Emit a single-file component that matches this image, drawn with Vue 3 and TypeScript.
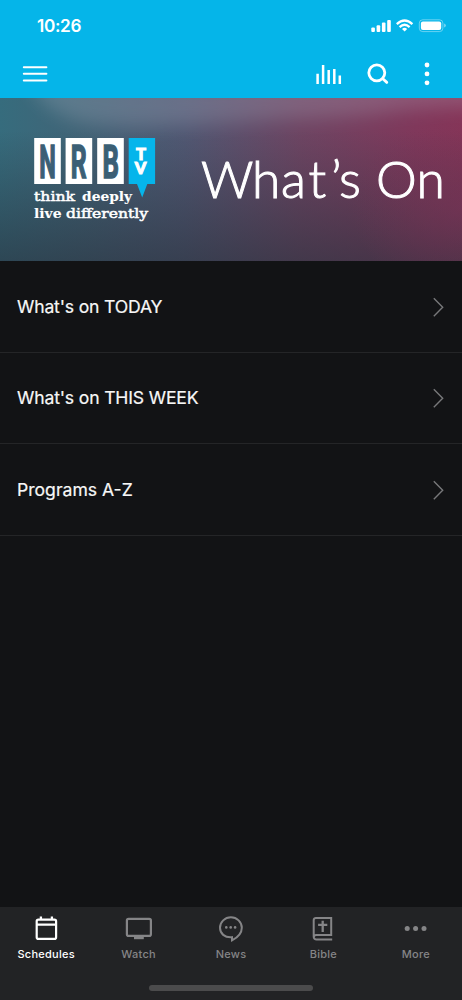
<script setup lang="ts">
interface Row { label: string; spacing: string }
interface Tab { id: string; label: string }

const rows: Row[] = [
  { label: "What's on TODAY", spacing: 'today' },
  { label: "What's on THIS WEEK", spacing: 'week' },
  { label: 'Programs A-Z', spacing: 'programs' },
]
const tabs: Tab[] = [
  { id: 'schedules', label: 'Schedules' },
  { id: 'watch', label: 'Watch' },
  { id: 'news', label: 'News' },
  { id: 'bible', label: 'Bible' },
  { id: 'more', label: 'More' },
]
const active = 'schedules'
</script>

<template>
  <div class="screen">
    <header class="top">
      <div class="status">
        <span class="time">10:26</span>
        <svg class="indicators" width="76" height="14" viewBox="0 0 76 14" fill="#fff">
          <rect x="1.3" y="8.5" width="3.6" height="4.5" rx="1" />
          <rect x="6.6" y="6.2" width="3.6" height="6.8" rx="1" />
          <rect x="11.9" y="3.6" width="3.6" height="9.4" rx="1" />
          <rect x="17.2" y="0.9" width="3.6" height="12.1" rx="1" />
          <g fill="none" stroke="#fff" stroke-width="2.3">
            <path d="M26.8 5.2 Q34.6 -2.1 42.4 5.2" />
            <path d="M29.6 8.1 Q34.6 3.5 39.6 8.1" />
          </g>
          <path d="M32 9.9 Q34.6 7.8 37.2 9.9 L34.6 12.6Z" />
          <rect x="49.3" y="0.8" width="23.6" height="11.8" rx="3.4" fill="none" stroke="#fff" stroke-opacity=".4" />
          <rect x="50.9" y="2.5" width="20.3" height="8.4" rx="2" />
          <path d="M74.2 4.6 Q75.8 5.2 75.8 6.6 T74.2 8.6Z" opacity=".5" />
        </svg>
      </div>
      <div class="toolbar">
        <svg width="26" height="18" viewBox="0 0 26 18" stroke="#fff" stroke-width="2" stroke-linecap="round">
          <path d="M1.8 2.2H24.4M1.8 8.8H24.4M1.8 15.4H24.4" />
        </svg>
        <div class="actions">
          <svg width="26" height="22" viewBox="0 0 26 22" stroke="#fff" stroke-width="2.5">
            <path d="M1.6 10.7V20.9M7.1 2V20.9M12.7 6.9V20.9M18.3 5.9V20.9M23.8 12.4V20.9" />
          </svg>
          <svg class="search" width="22" height="22" viewBox="0 0 22 22" fill="none" stroke="#fff" stroke-width="2.8" stroke-linecap="round">
            <circle cx="9.8" cy="9.8" r="8" /><path d="M15.8 15.8L19.8 19.4" />
          </svg>
          <svg class="dots" width="6" height="24" viewBox="0 0 6 24" fill="#fff">
            <circle cx="3" cy="3" r="2.4" /><circle cx="3" cy="11.9" r="2.4" /><circle cx="3" cy="20.8" r="2.4" />
          </svg>
        </div>
      </div>
    </header>

    <svg class="banner" width="462" height="163" viewBox="0 0 462 163">
      <defs>
        <linearGradient id="hue" x1="0" x2="1">
          <stop offset="0" stop-color="#366c7d" /><stop offset=".17" stop-color="#416477" />
          <stop offset=".4" stop-color="#515873" /><stop offset=".65" stop-color="#6e4563" />
          <stop offset=".9" stop-color="#80385b" /><stop offset="1" stop-color="#853558" />
        </linearGradient>
        <linearGradient id="shade" x1="0" y1="0" x2="0" y2="1">
          <stop offset=".2" stop-color="#28303c" stop-opacity="0" />
          <stop offset="1" stop-color="#28303c" stop-opacity=".62" />
        </linearGradient>
        <radialGradient id="rose"><stop offset="0" stop-color="#7c3458" stop-opacity=".5" /><stop offset="1" stop-color="#7c3458" stop-opacity="0" /></radialGradient>
        <filter id="soft" x="-20%" y="-100%" width="140%" height="300%"><feGaussianBlur stdDeviation="9" /></filter>
      </defs>
      <rect width="462" height="163" fill="url(#hue)" />
      <rect width="462" height="163" fill="url(#shade)" />
      <ellipse cx="462" cy="110" rx="110" ry="90" fill="url(#rose)" />
      <path d="M20 -40H520V8Q430 8 390 14T290 21Q190 27 150 28T80 24Q30 10 20 -40Z" fill="#bec4d4" opacity=".22" filter="url(#soft)" />

      <g fill="#fff">
        <rect x="34.2" y="40" width="26.6" height="46" />
        <rect x="65.6" y="40" width="26.6" height="46" />
        <rect x="97.2" y="40" width="26.6" height="46" />
      </g>
      <path d="M128.7 40H155.1V86H147.3L142.2 99.5L137 86H128.7Z" fill="#05b5eb" />
      <g class="letters" fill="#3b5f75">
        <text transform="translate(39.2 80) scale(.51 1)">N</text>
        <text transform="translate(70.8 80) scale(.54 1)">R</text>
        <text transform="translate(102.4 80) scale(.56 1)">B</text>
      </g>
      <text class="channel" fill="#fff" x="136 134.7" y="62 76.4">TV</text>
      <g class="tagline" fill="#fff">
        <text x="34" y="103" textLength="41" lengthAdjust="spacingAndGlyphs">think</text>
        <text class="strong" x="82" y="103" textLength="50" lengthAdjust="spacingAndGlyphs">deeply</text>
        <text class="strong" x="34" y="119.5" textLength="27.5" lengthAdjust="spacingAndGlyphs">live</text>
        <text x="66" y="119.5" textLength="82" lengthAdjust="spacingAndGlyphs">differently</text>
      </g>
      <text class="headline" x="201 252 281 308.5 331 339 360 376 416.5" y="99.7" fill="#fff">What’s On</text>
    </svg>

    <main class="list">
      <div v-for="row in rows" :key="row.label" class="row">
        <span :class="row.spacing">{{ row.label }}</span>
        <svg width="12" height="21" viewBox="0 0 12 21" fill="none" stroke="#77787a" stroke-width="1.4"><path d="M1.8 2.2L10.7 11.2L1.8 20.2" /></svg>
      </div>
    </main>

    <nav class="tabs">
      <div v-for="tab in tabs" :key="tab.id" class="tab" :class="{ active: tab.id === active }">
        <svg width="28" height="28" viewBox="0 0 28 28" fill="none" stroke="currentColor" stroke-width="2">
          <g v-if="tab.id === 'schedules'">
            <rect x="4.7" y="5.6" width="19.4" height="19.3" rx="1.7" stroke-width="2.2" />
            <path d="M4 10.6H24M8.9 2.6V6M19.9 2.6V6" stroke-width="2.3" />
          </g>
          <g v-else-if="tab.id === 'watch'">
            <rect x="1.9" y="4.9" width="24" height="17" rx="1.7" stroke-width="2.2" />
            <rect x="9" y="22" width="9.8" height="3.2" fill="currentColor" stroke="none" />
          </g>
          <g v-else-if="tab.id === 'news'">
            <path d="M15 26.4V23.2C7.6 23.9 3 19.4 3 13.8A10.9 10.5 0 0 1 24.8 13.8C24.8 19 21 23.4 15 26.4Z" />
            <g fill="currentColor" stroke="none"><circle cx="9.3" cy="13.4" r="1.3" /><circle cx="13.7" cy="13.4" r="1.3" /><circle cx="18.1" cy="13.4" r="1.3" /></g>
          </g>
          <g v-else-if="tab.id === 'bible'">
            <path d="M23.2 25.5H7.5A2.8 2.8 0 0 1 4.7 22.7V6.1A2.2 2.2 0 0 1 6.9 3.9H22.2V20.9H7.5A2.4 2.4 0 0 0 4.9 22.9" />
            <path d="M13.7 6.7V17.9M9.1 10.9H18.3" stroke-width="2.3" />
          </g>
          <g v-else fill="currentColor" stroke="none"><circle cx="5.2" cy="14.6" r="2.5" /><circle cx="13.6" cy="14.6" r="2.5" /><circle cx="22" cy="14.6" r="2.5" /></g>
        </svg>
        <span>{{ tab.label }}</span>
      </div>
      <i class="home"></i>
    </nav>
  </div>
</template>

<style scoped>
.screen { width: 462px; height: 1000px; display: flex; flex-direction: column; overflow: hidden; background: #121315; color: #f7f7f7; font-family: Inter, "Liberation Sans", sans-serif; }
svg { display: block; flex: none; }
.top { height: 98px; flex: none; background: #05b5e9; color: #fff; }
.status { height: 50px; display: flex; align-items: center; justify-content: space-between; padding: 1px 16px 0 37px; box-sizing: border-box; }
.time { font-size: 17.2px; font-weight: 600; letter-spacing: -.35px; }
.toolbar { height: 48px; display: flex; align-items: center; justify-content: space-between; padding: 0 32px 0 22px; }
.actions { display: flex; align-items: center; }
.search { margin-left: 25px; }
.dots { margin-left: 35px; }
.letters { font: 700 46px Roboto, sans-serif; stroke: #3b5f75; stroke-width: 1.6px; }
.channel { font: 900 16.5px Lato, sans-serif; stroke: #fff; stroke-width: 1px; }
.tagline { font: 400 13px "DejaVu Serif", serif; stroke: #fff; stroke-width: .5px; }
.strong { font-weight: 700; stroke-width: .1px; }
.headline { font: 300 51.5px Lato, sans-serif; stroke: #fff; stroke-width: 1px; }
.list { flex: 1; }
.row { height: 91.5px; box-sizing: border-box; display: flex; align-items: center; justify-content: space-between; padding: 0 18px 0 17px; border-bottom: 1px solid #242527; font-size: 17.6px; -webkit-text-stroke: .2px #f7f7f7; }
.today { letter-spacing: -.17px; }
.week { letter-spacing: -.16px; }
.tabs { position: relative; height: 93px; flex: none; display: flex; background: #222325; color: #858587; }
.tab { flex: 1; display: flex; flex-direction: column; align-items: center; padding-top: 7px; font-size: 11px; font-weight: 500; letter-spacing: .25px; }
.tab span { margin-top: 5px; line-height: 15px; }
.active { color: #fff; }
.home { position: absolute; left: 149px; bottom: 9px; width: 164px; height: 6px; border-radius: 3px; background: #4b4b4c; }
</style>

<style>
body { background: #121315; }
</style>
